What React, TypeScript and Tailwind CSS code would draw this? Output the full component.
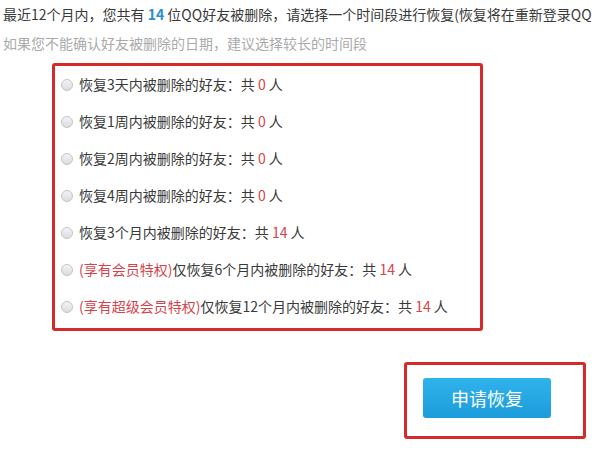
import React from 'react';

const options = [
  { vip: '', label: '恢复3天内被删除的好友：共', count: 0 },
  { vip: '', label: '恢复1周内被删除的好友：共', count: 0 },
  { vip: '', label: '恢复2周内被删除的好友：共', count: 0 },
  { vip: '', label: '恢复4周内被删除的好友：共', count: 0 },
  { vip: '', label: '恢复3个月内被删除的好友：共', count: 14 },
  { vip: '(享有会员特权)', label: '仅恢复6个月内被删除的好友：共', count: 14 },
  { vip: '(享有超级会员特权)', label: '仅恢复12个月内被删除的好友：共', count: 14 },
];

function Radio() {
  return (
    <span className="inline-block w-[12px] h-[12px] rounded-full border border-[#c4c4c4] bg-gradient-to-b from-[#f4f4f4] to-[#dcdcdc] shrink-0" />
  );
}

export default function App() {
  return (
    <div className="w-[600px] h-[450px] overflow-hidden bg-white text-[14px] text-[#3a3a3a] font-['Microsoft_YaHei','Noto_Sans_CJK_SC',sans-serif]">
      <div className="pl-[3px] h-[29px] leading-[28px] whitespace-nowrap">
        最近12个月内，您共有 <span className="text-[#2b8fd0] font-bold">14</span> 位QQ好友被删除，请选择一个时间段进行恢复(恢复将在重新登录QQ
      </div>
      <div className="pl-[3px] h-[28px] leading-[28px] text-[#aaaaaa] whitespace-nowrap">
        如果您不能确认好友被删除的日期，建议选择较长的时间段
      </div>

      <div className="mt-[6px] ml-[52px] w-[431px] h-[268px] border-[3px] border-[#d42a2a] rounded-[3px] pb-[2px]">
        {options.map((o, i) => (
          <div key={i} className="h-[37px] flex items-center pl-[6px] gap-[6px] whitespace-nowrap">
            <Radio />
            <span>
              {o.vip && <span className="text-[#d6434a]">{o.vip}</span>}
              {o.label} <span className="text-[#d6434a]">{o.count}</span> 人
            </span>
          </div>
        ))}
      </div>

      <div className="mt-[31px] ml-[404px] w-[182px] h-[77px] border-[3px] border-[#d42a2a] rounded-[3px] pl-[16px] pt-[13px]">
        <button className="w-[128px] h-[40px] rounded-[3px] bg-gradient-to-b from-[#2fb3ec] to-[#1c9cdb] text-white text-[18px] leading-[40px]">
          申请恢复
        </button>
      </div>
    </div>
  );
}
